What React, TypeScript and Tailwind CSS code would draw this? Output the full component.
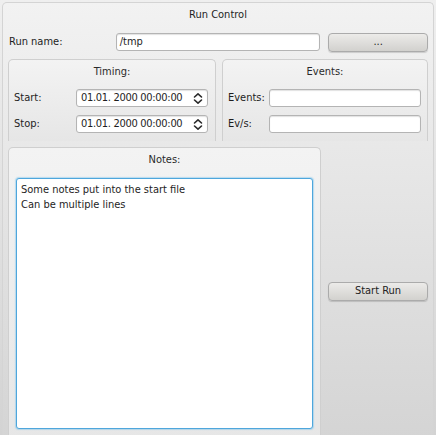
import React from 'react';

const font = { fontFamily: '"DejaVu Sans Condensed", "DejaVu Sans", sans-serif' };

function TextBox({ value, className }: { value?: string; className: string }) {
    return (
        <div
            className={`h-[18px] rounded-[3px] border border-[#b4b4b4] bg-white shadow-[inset_0_1px_1px_rgba(0,0,0,0.12)] px-[3px] flex items-center text-[11px] text-[#1e1e1e] ${className}`}
        >
            {value}
        </div>
    );
}

function SpinBox({ value }: { value: string }) {
    return (
        <div className="h-[18px] w-[132px] rounded-[3px] border border-[#b4b4b4] bg-white shadow-[inset_0_1px_1px_rgba(0,0,0,0.12)] pl-[4px] pr-[4px] flex items-center justify-between text-[11px] text-[#1e1e1e]">
            <span className="tracking-[-0.3px]">{value}</span>
            <svg width="10" height="13" viewBox="0 0 10 13" fill="none" stroke="#2a2a2a" strokeWidth="1.6" strokeLinecap="round" strokeLinejoin="round">
                <path d="M1.5 5 L5 1.8 L8.5 5" />
                <path d="M1.5 8 L5 11.2 L8.5 8" />
            </svg>
        </div>
    );
}

function Button({ label, className }: { label: string; className: string }) {
    return (
        <div
            className={`h-[19px] rounded-[4px] border border-[#ababab] bg-gradient-to-b from-[#ecebe9] to-[#d2d1ce] shadow-[0_1px_1px_rgba(0,0,0,0.15)] flex items-center justify-center text-[11px] text-[#222] ${className}`}
        >
            {label}
        </div>
    );
}

function Group({ title, className, children }: { title: string; className: string; children: React.ReactNode }) {
    return (
        <div
            className={`rounded-t-[5px] border border-b-0 border-[#cfcfcf] bg-gradient-to-b from-[#f3f3f3] to-[#e6e6e6] ${className}`}
        >
            <div className="h-[24px] flex items-center justify-center text-[11px] text-[#2a2a2a]">{title}</div>
            {children}
        </div>
    );
}

export default function App() {
    return (
        <div style={font} className="w-[436px] h-[435px] overflow-hidden bg-gradient-to-b from-[#efefef] to-[#d3d3d3] pt-[2px] px-[2px]">
            <div className="h-[440px] rounded-t-[5px] border border-b-0 border-[#d4d4d4] bg-gradient-to-b from-[#f2f2f2] to-[#d4d4d4] px-[5px] text-[#1e1e1e]">
                <div className="h-[24px] flex items-center justify-center text-[11px]">Run Control</div>
                <div className="flex items-center h-[18px] mt-[6px]">
                    <div className="w-[108px] text-[11px] pl-[1px]">Run name:</div>
                    <TextBox value="/tmp" className="w-[205px]" />
                    <Button label="..." className="w-[100px] ml-[8px]" />
                </div>
                <div className="flex mt-[8px] gap-[6px]">
                    <Group title="Timing:" className="w-[209px] h-[82px]">
                        <div className="flex flex-col gap-[8px] mt-[5px] pl-[5px]">
                            <div className="flex items-center">
                                <div className="w-[62px] text-[11px]">Start:</div>
                                <SpinBox value="01.01. 2000 00:00:00" />
                            </div>
                            <div className="flex items-center">
                                <div className="w-[62px] text-[11px]">Stop:</div>
                                <SpinBox value="01.01. 2000 00:00:00" />
                            </div>
                        </div>
                    </Group>
                    <Group title="Events:" className="w-[207px] h-[82px]">
                        <div className="flex flex-col gap-[8px] mt-[5px] pl-[5px]">
                            <div className="flex items-center">
                                <div className="w-[41px] text-[11px]">Events:</div>
                                <TextBox className="w-[152px]" />
                            </div>
                            <div className="flex items-center">
                                <div className="w-[41px] text-[11px]">Ev/s:</div>
                                <TextBox className="w-[152px]" />
                            </div>
                        </div>
                    </Group>
                </div>
                <div className="flex mt-[6px]">
                    <Group title="Notes:" className="w-[314px] h-[300px] px-[7px]">
                        <div className="mt-[6px] h-[251px] rounded-[3px] border border-[#4ea6dc] bg-white shadow-[0_0_1px_1px_rgba(110,190,235,0.45)] px-[4px] py-[3px] text-[11px] leading-[15px]">
                            <div>Some notes put into the start file</div>
                            <div>Can be multiple lines</div>
                        </div>
                    </Group>
                    <div className="flex-1 flex items-start">
                        <Button label="Start Run" className="w-[100px] ml-[7px] mt-[135px]" />
                    </div>
                </div>
            </div>
        </div>
    );
}
